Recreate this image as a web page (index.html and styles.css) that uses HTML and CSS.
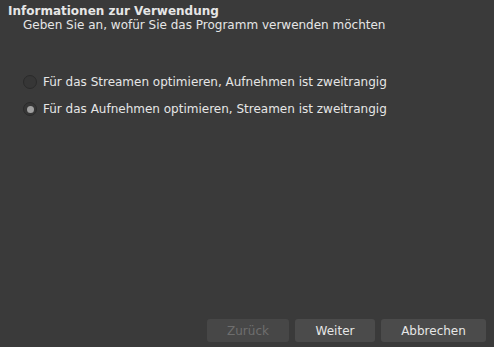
FILE: index.html
```html
<!DOCTYPE html>
<html lang="de">
<head>
    <meta charset="UTF-8">
    <title>Informationen zur Verwendung</title>
    <link rel="stylesheet" href="styles.css">
</head>
<body>
    <div class="page">
        <div class="header">
            <div class="title">Informationen zur Verwendung</div>
            <div class="subtitle">Geben Sie an, wofür Sie das Programm verwenden möchten</div>
        </div>
        <div class="options">
            <label class="option"><span class="radio"></span>Für das Streamen optimieren, Aufnehmen ist zweitrangig</label>
            <label class="option"><span class="radio checked"></span>Für das Aufnehmen optimieren, Streamen ist zweitrangig</label>
        </div>
        <div class="buttons">
            <button class="btn disabled">Zurück</button>
            <button class="btn btn-next">Weiter</button>
            <button class="btn btn-cancel">Abbrechen</button>
        </div>
    </div>
</body>
</html>
```
FILE: styles.css
```css
html, body {
    margin: 0;
    height: 100%;
    background-color: #3a3a3a;
}
body {
    font-family: "DejaVu Sans", sans-serif;
    font-size: 12px;
    color: #e6e6e6;
}
.page {
    display: flex;
    flex-direction: column;
    height: 100%;
    box-sizing: border-box;
    padding: 4px 8px 5px 8px;
}
.title {
    font-weight: bold;
    line-height: 14px;
}
.subtitle {
    padding-left: 15px;
    line-height: 15px;
}
.options {
    flex: 1;
    display: flex;
    flex-direction: column;
    gap: 13px;
    padding-top: 42px;
    padding-left: 15px;
}
.option {
    display: flex;
    align-items: center;
    gap: 6px;
    line-height: 14px;
}
.radio {
    flex: none;
    width: 12px;
    height: 12px;
    border-radius: 50%;
    border: 1px solid #2a2a2a;
    background-color: #363636;
    display: flex;
    align-items: center;
    justify-content: center;
}
.radio.checked::after {
    content: "";
    width: 7px;
    height: 7px;
    border-radius: 50%;
    background-color: #a0a0a0;
}
.buttons {
    display: flex;
    justify-content: flex-end;
    gap: 6px;
}
.btn {
    font-family: "DejaVu Sans", sans-serif;
    font-size: 12px;
    height: 23px;
    border: none;
    border-radius: 3px;
    background-color: #4b4b4b;
    color: #e6e6e6;
    padding: 0;
}
.btn.disabled {
    width: 82px;
    color: #6e6e6e;
    background-color: #474747;
}
.btn-next {
    width: 80px;
}
.btn-cancel {
    width: 105px;
}
```
